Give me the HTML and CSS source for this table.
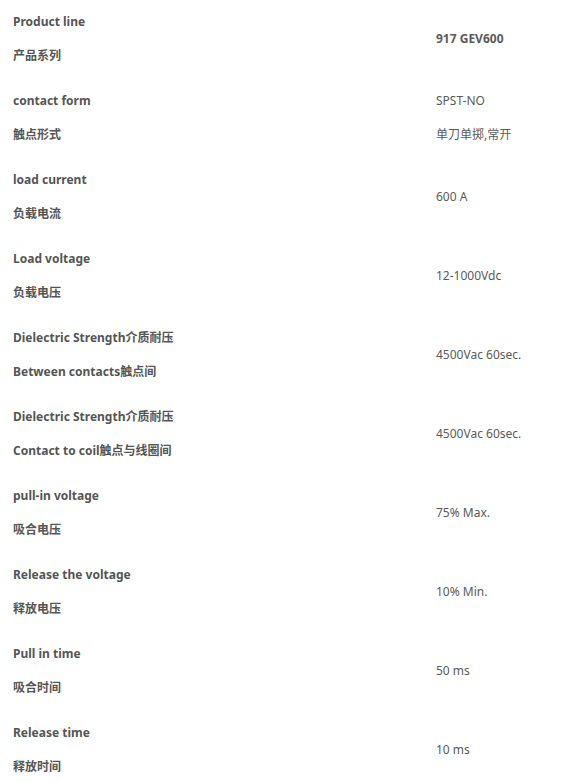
FILE: index.html
```html
<!DOCTYPE html>
<html lang="zh-CN">
  <head>
    <meta charset="UTF-8" />
    <title>917 GEV600</title>
    <link rel="stylesheet" href="styles.css">
  </head>
  <body>
    <div class="specs">
      <div class="row">
        <div class="label"><p>Product line</p><p>产品系列</p></div>
        <div class="value"><p><b>917 GEV600</b></p></div>
      </div>
      <div class="row">
        <div class="label"><p>contact form</p><p>触点形式</p></div>
        <div class="value"><p>SPST-NO</p><p>单刀单掷,常开</p></div>
      </div>
      <div class="row">
        <div class="label"><p>load current</p><p>负载电流</p></div>
        <div class="value"><p>600 A</p></div>
      </div>
      <div class="row">
        <div class="label"><p>Load voltage</p><p>负载电压</p></div>
        <div class="value"><p>12-1000Vdc</p></div>
      </div>
      <div class="row">
        <div class="label"><p>Dielectric Strength介质耐压</p><p>Between contacts触点间</p></div>
        <div class="value"><p>4500Vac 60sec.</p></div>
      </div>
      <div class="row">
        <div class="label"><p>Dielectric Strength介质耐压</p><p>Contact to coil触点与线圈间</p></div>
        <div class="value"><p>4500Vac 60sec.</p></div>
      </div>
      <div class="row">
        <div class="label"><p>pull-in voltage</p><p>吸合电压</p></div>
        <div class="value"><p>75% Max.</p></div>
      </div>
      <div class="row">
        <div class="label"><p>Release the voltage</p><p>释放电压</p></div>
        <div class="value"><p>10% Min.</p></div>
      </div>
      <div class="row">
        <div class="label"><p>Pull in time</p><p>吸合时间</p></div>
        <div class="value"><p>50 ms</p></div>
      </div>
      <div class="row">
        <div class="label"><p>Release time</p><p>释放时间</p></div>
        <div class="value"><p>10 ms</p></div>
      </div>
    </div>
  </body>
</html>
```

FILE: styles.css
```css
body {
  margin: 0;
  font-family: "Noto Sans", "Noto Sans CJK SC", sans-serif;
  font-size: 12px;
  color: #555;
  background: #fff;
}
.specs {
  padding-left: 13px;
}
.row {
  display: grid;
  grid-template-columns: 423px 1fr;
  align-items: center;
  padding: 12px 0 13px 0;
}
.specs p {
  margin: 0;
  line-height: 20px;
}
.specs p + p {
  margin-top: 14px;
}
.label {
  font-weight: bold;
}
.value {
  color: #5a5a5a;
}
```
